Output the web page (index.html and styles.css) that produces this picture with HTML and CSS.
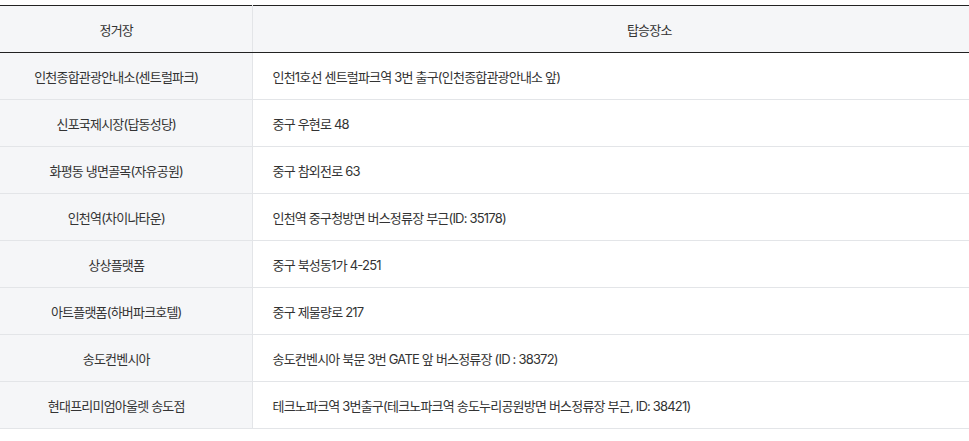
FILE: index.html
```html
<!DOCTYPE html>
<html lang="ko">
<head>
<meta charset="utf-8">
<link rel="stylesheet" href="styles.css">
</head>
<body>
<div class="wrap">
<table class="stops">
<thead>
<tr><th class="c1">정거장</th><th class="c2">탑승장소</th></tr>
</thead>
<tbody>
<tr><td class="c1">인천종합관광안내소(센트럴파크)</td><td class="c2">인천1호선 센트럴파크역 3번 출구(인천종합관광안내소 앞)</td></tr>
<tr><td class="c1">신포국제시장(답동성당)</td><td class="c2">중구 우현로 48</td></tr>
<tr><td class="c1">화평동 냉면골목(자유공원)</td><td class="c2">중구 참외전로 63</td></tr>
<tr><td class="c1">인천역(차이나타운)</td><td class="c2">인천역 중구청방면 버스정류장 부근(ID: 35178)</td></tr>
<tr><td class="c1">상상플랫폼</td><td class="c2">중구 북성동1가 4-251</td></tr>
<tr><td class="c1">아트플랫폼(하버파크호텔)</td><td class="c2">중구 제물량로 217</td></tr>
<tr><td class="c1">송도컨벤시아</td><td class="c2">송도컨벤시아 북문 3번 GATE 앞 버스정류장 (ID : 38372)</td></tr>
<tr><td class="c1">현대프리미엄아울렛 송도점</td><td class="c2">테크노파크역 3번출구(테크노파크역 송도누리공원방면 버스정류장 부근, ID: 38421)</td></tr>
</tbody>
</table>
</div>
</body>
</html>
```
FILE: styles.css
```css
html, body {
  margin: 0;
  padding: 0;
  background: #fff;
}
body {
  font-family: "Inter", "Noto Sans CJK KR", sans-serif;
  font-size: 13px;
  color: #333;
}
.wrap {
  padding-top: 5px;
  overflow: hidden;
  width: 969px;
}
.stops {
  border-collapse: collapse;
  margin-left: -19px;
  width: 1065px;
  table-layout: fixed;
  border-top: 1px solid #222;
}
.stops th, .stops td {
  height: 47px;
  padding: 0;
  font-weight: 400;
  box-sizing: border-box;
  vertical-align: middle;
  letter-spacing: -0.8px;
}
.stops th {
  background: #f5f6f8;
  border-bottom: 1px solid #222;
  text-align: center;
}
.stops th.c1 { border-right: 1px solid #e3e5e8; }
.stops td {
  border-bottom: 1px solid #e3e5e8;
}
.c1 { width: 271px; }
.stops td.c1 {
  background: #f5f6f8;
  text-align: center;
  border-right: 1px solid #e3e5e8;
}
.stops td.c2 {
  text-align: left;
  padding-left: 20px;
}
```
